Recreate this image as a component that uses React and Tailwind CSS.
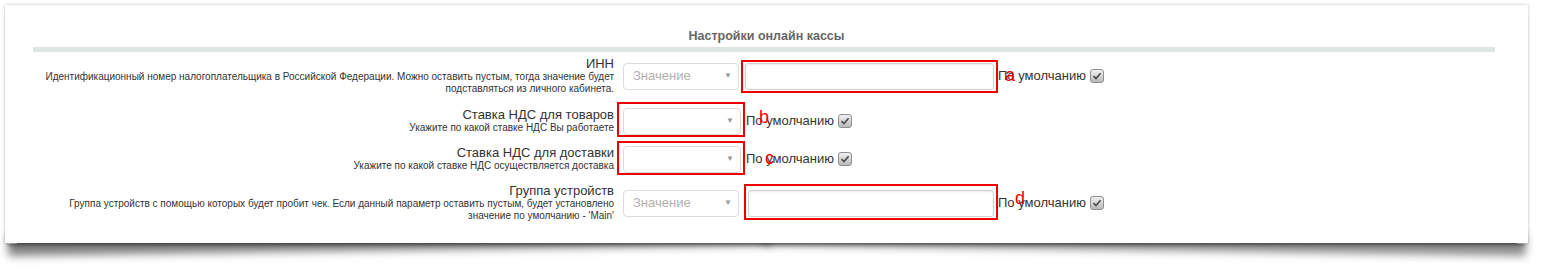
import React from "react";

const font = "font-['Liberation_Sans',Arial,sans-serif]";

const Checkbox = () => (
  <span className="ml-[4px] inline-flex h-[14px] w-[14px] items-center justify-center rounded-[3px] border border-[#8f8f8f] bg-gradient-to-b from-[#f2f2f2] to-[#b9b9b9]">
    <svg width="10" height="10" viewBox="0 0 10 10">
      <path d="M1.5 5.2 L4 7.6 L8.6 2.2" fill="none" stroke="#4a4a4a" strokeWidth="1.6" />
    </svg>
  </span>
);

const Select = ({ placeholder, wide }) => (
  <div
    className={`flex h-[27px] items-center justify-between rounded-[4px] border border-[#dcdcdc] bg-white pl-[9px] pr-[6px] ${
      wide ? "w-[118px]" : "w-[116px]"
    }`}
  >
    <span className="text-[13px] text-[#b0b0b0]">{placeholder}</span>
    <span className="text-[8px] text-[#999]">▼</span>
  </div>
);

const Mark = ({ children, className }) => (
  <span className={`absolute text-[18px] leading-none text-[#ee0000] ${className}`}>
    {children}
  </span>
);

const Default = ({ mark, markClass, className }) => (
  <div className={`flex items-center ${className}`}>
    <span className="relative text-[13px] text-[#333]">
      По умолчанию
      <Mark className={markClass}>{mark}</Mark>
    </span>
    <Checkbox />
  </div>
);

const Label = ({ title, children }) => (
  <div className="w-[609px] whitespace-nowrap text-right leading-none text-[#333]">
    <div className="text-[13px] leading-[14px]">{title}</div>
    <div className="text-[10px] leading-[12px]">{children}</div>
  </div>
);

// red annotation frame drawn over a control
const Boxed = ({ children, className, frame }) => (
  <div className={`relative ${className}`}>
    {children}
    <div className={`pointer-events-none absolute border-2 border-[#ee0000] ${frame}`} />
  </div>
);

const Input = ({ className }) => (
  <div
    className={`h-[27px] rounded-[3px] border border-[#cfcfcf] bg-white shadow-[inset_0_1px_2px_rgba(0,0,0,0.08)] ${className}`}
  />
);

export default function App() {
  return (
    <div className={`isolate h-[273px] w-[1542px] bg-white pl-[5px] pt-[5px] ${font}`}>
      <div className="relative h-[238px] w-[1523px] bg-white shadow-[0_0_3px_rgba(0,0,0,0.25),0_5px_4px_-3px_rgba(0,0,0,0.45)]">
        {/* lifted-corner shadows */}
        <div className="absolute bottom-[10px] left-[3px] -z-10 h-[20px] w-1/2 origin-right -rotate-[0.8deg] shadow-[0_12px_8px_rgba(0,0,0,0.5)]" />
        <div className="absolute bottom-[10px] right-[3px] -z-10 h-[20px] w-1/2 origin-left rotate-[0.8deg] shadow-[0_12px_8px_rgba(0,0,0,0.45)]" />

        <div className="pt-[23px] text-center text-[12.5px] font-bold leading-[16px] text-[#666]">
          Настройки онлайн кассы
        </div>
        <div className="ml-[28px] mt-[3px] h-[5px] w-[1462px] bg-[#dde5e5]" />

        {/* ИНН */}
        <div className="mt-[5px] flex h-[38px] items-center">
          <Label title="ИНН">
            Идентификационный номер налогоплательщика в Российской Федерации. Можно оставить пустым, тогда значение будет
            <br />
            подставляться из личного кабинета.
          </Label>
          <div className="ml-[9px]">
            <Select placeholder="Значение" />
          </div>
          <Boxed className="ml-[6px]" frame="-left-[4px] -right-[4px] -top-[3px] -bottom-[3px]">
            <Input className="w-[249px]" />
          </Boxed>
          <Default mark="a" markClass="left-[7px] top-[0px]" className="ml-[4px]" />
        </div>

        {/* НДС товары */}
        <div className="mt-[12px] flex h-[28px] items-center">
          <Label title="Ставка НДС для товаров">Укажите по какой ставке НДС Вы работаете</Label>
          <Boxed className="ml-[9px]" frame="-left-[6px] -right-[4px] -top-[6px] -bottom-[2px]">
            <Select wide />
          </Boxed>
          <Default mark="b" markClass="left-[13px] -top-[3px]" className="ml-[5px]" />
        </div>

        {/* НДС доставка */}
        <div className="mt-[10px] flex h-[28px] items-center">
          <Label title="Ставка НДС для доставки">Укажите по какой ставке НДС осуществляется доставка</Label>
          <Boxed className="ml-[9px]" frame="-left-[6px] -right-[4px] -top-[5px] -bottom-[2px]">
            <Select wide />
          </Boxed>
          <Default mark="c" markClass="left-[19px] top-[0px]" className="ml-[5px]" />
        </div>

        {/* Группа устройств */}
        <div className="mt-[11px] flex h-[38px] items-center">
          <Label title="Группа устройств">
            Группа устройств с помощью которых будет пробит чек. Если данный параметр оставить пустым, будет установлено
            <br />
            значение по умолчанию - 'Main'
          </Label>
          <div className="ml-[9px]">
            <Select placeholder="Значение" />
          </div>
          <Boxed className="ml-[9px]" frame="-left-[4px] -right-[4px] -top-[6px] -bottom-[3px]">
            <Input className="w-[246px]" />
          </Boxed>
          <Default mark="d" markClass="left-[17px] -top-[4px]" className="ml-[4px]" />
        </div>
      </div>
    </div>
  );
}
